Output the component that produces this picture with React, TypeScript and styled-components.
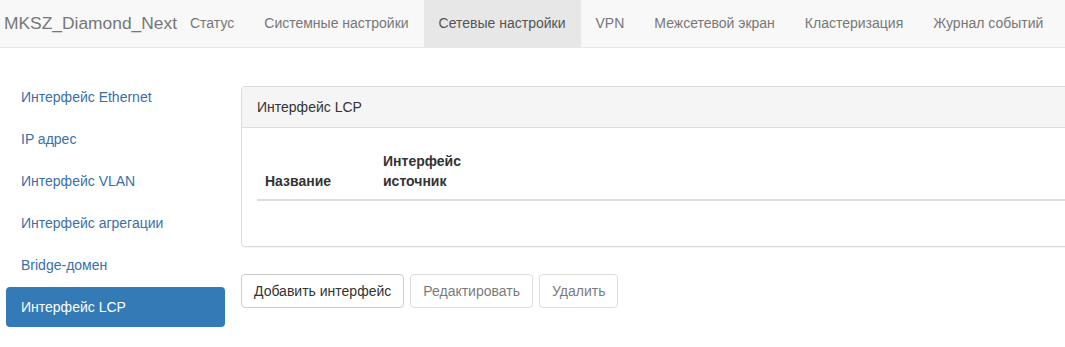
import React from 'react';
import styled, { createGlobalStyle } from 'styled-components';

const GlobalStyle = createGlobalStyle`
  html, body {
    margin: 0;
    padding: 0;
    overflow: hidden;
    background: #fff;
  }
  body {
    font-family: "Liberation Sans", Arial, Helvetica, sans-serif;
    font-size: 14px;
    line-height: 20px;
    color: #333;
  }
  * { box-sizing: border-box; }
`;

const Navbar = styled.nav`
  display: flex;
  align-items: stretch;
  height: 48px;
  background: #f8f8f8;
  border-bottom: 1px solid #e7e7e7;
`;

const Brand = styled.a`
  display: flex;
  align-items: center;
  flex-shrink: 0;
  padding: 0 0 2px 4px;
  width: 175px;
  font-size: 17.4px;
  color: #777;
  text-decoration: none;
  white-space: nowrap;
`;

const NavItem = styled.a<{ $active?: boolean }>`
  display: flex;
  align-items: center;
  padding: 0 15px 2px;
  color: ${p => (p.$active ? '#555' : '#777')};
  background: ${p => (p.$active ? '#e7e7e7' : 'transparent')};
  text-decoration: none;
  white-space: nowrap;
`;

const Layout = styled.div`
  display: flex;
  align-items: flex-start;
  gap: 16px;
  padding: 29px 0 0 6px;
`;

const Sidebar = styled.ul`
  display: flex;
  flex-direction: column;
  gap: 2px;
  width: 219px;
  flex-shrink: 0;
  margin: 0;
  padding: 0;
  list-style: none;
`;

const Pill = styled.a<{ $active?: boolean }>`
  display: block;
  padding: 10px 15px;
  border-radius: 4px;
  color: ${p => (p.$active ? '#fff' : '#3a70a8')};
  background: ${p => (p.$active ? '#337ab7' : 'transparent')};
  text-decoration: none;
`;

const Main = styled.div`
  width: 850px;
  flex-shrink: 0;
  padding-top: 9px;
`;

const Panel = styled.div`
  border: 1px solid #ddd;
  border-radius: 4px;
  background: #fff;
  box-shadow: 0 1px 1px rgba(0, 0, 0, 0.05);
`;

const PanelHeading = styled.div`
  padding: 10px 15px;
  background: #f5f5f5;
  border-bottom: 1px solid #ddd;
  border-radius: 3px 3px 0 0;
  color: #333;
`;

const PanelBody = styled.div`
  padding: 15px;
`;

const Table = styled.table`
  width: 100%;
  border-collapse: collapse;
  margin-bottom: 30px;
`;

const Th = styled.th<{ $width?: number }>`
  width: ${p => (p.$width ? `${p.$width}px` : 'auto')};
  padding: 8px;
  text-align: left;
  vertical-align: bottom;
  font-weight: bold;
  border-bottom: 2px solid #ddd;
`;

const Actions = styled.div`
  display: flex;
  gap: 6px;
  margin-top: 27px;
`;

const Button = styled.button`
  padding: 6px 12px;
  font-family: inherit;
  font-size: 14px;
  line-height: 20px;
  color: #333;
  background: #fff;
  border: 1px solid #ccc;
  border-radius: 4px;
  cursor: pointer;

  &:disabled {
    opacity: 0.65;
    cursor: not-allowed;
  }
`;

const menu = ['Статус', 'Системные настройки', 'Сетевые настройки', 'VPN', 'Межсетевой экран', 'Кластеризация', 'Журнал событий'];
const sections = ['Интерфейс Ethernet', 'IP адрес', 'Интерфейс VLAN', 'Интерфейс агрегации', 'Bridge-домен', 'Интерфейс LCP'];

export default function App() {
  return (
    <>
      <GlobalStyle />
      <Navbar>
        <Brand href="#">MKSZ_Diamond_Next</Brand>
        {menu.map(item => (
          <NavItem key={item} href="#" $active={item === 'Сетевые настройки'}>
            {item}
          </NavItem>
        ))}
      </Navbar>
      <Layout>
        <Sidebar>
          {sections.map(s => (
            <li key={s}>
              <Pill href="#" $active={s === 'Интерфейс LCP'}>{s}</Pill>
            </li>
          ))}
        </Sidebar>
        <Main>
          <Panel>
            <PanelHeading>Интерфейс LCP</PanelHeading>
            <PanelBody>
              <Table>
                <thead>
                  <tr>
                    <Th $width={118}>Название</Th>
                    <Th $width={90}>Интерфейс источник</Th>
                    <Th />
                  </tr>
                </thead>
              </Table>
            </PanelBody>
          </Panel>
          <Actions>
            <Button>Добавить интерфейс</Button>
            <Button disabled>Редактировать</Button>
            <Button disabled>Удалить</Button>
          </Actions>
        </Main>
      </Layout>
    </>
  );
}
